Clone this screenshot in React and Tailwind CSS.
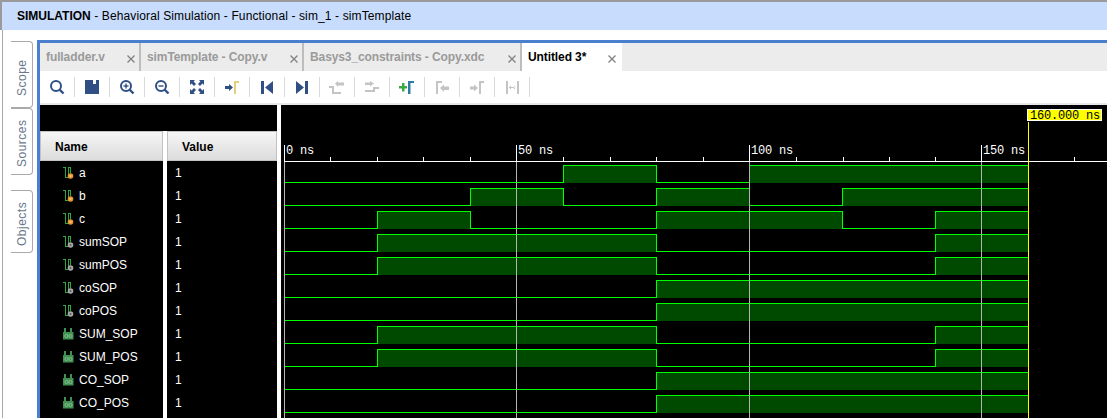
import React from 'react';

const signals = [
  { name: 'a', kind: 'in', edges: [564, 657, 750] },
  { name: 'b', kind: 'in', edges: [471, 564, 657, 750, 843] },
  { name: 'c', kind: 'in', edges: [378, 471, 657, 843, 936] },
  { name: 'sumSOP', kind: 'net', edges: [378, 657, 936] },
  { name: 'sumPOS', kind: 'net', edges: [378, 657, 936] },
  { name: 'coSOP', kind: 'net', edges: [657] },
  { name: 'coPOS', kind: 'net', edges: [657] },
  { name: 'SUM_SOP', kind: 'reg', edges: [378, 657, 936] },
  { name: 'SUM_POS', kind: 'reg', edges: [378, 657, 936] },
  { name: 'CO_SOP', kind: 'reg', edges: [657] },
  { name: 'CO_POS', kind: 'reg', edges: [657] },
];

const tabs = [
  { label: 'fulladder.v', width: 'w-[101px]' },
  { label: 'simTemplate - Copy.v', width: 'w-[163px]' },
  { label: 'Basys3_constraints - Copy.xdc', width: 'w-[218px]' },
  { label: 'Untitled 3*', width: 'w-[100px]', active: true },
];

const NAVY = '#2f4f85';
const GRAY = '#c4c4c4';

const Glass = ({ sign }) => (
  <>
    <circle cx="7" cy="7" r="5" fill="none" stroke={NAVY} strokeWidth="2" />
    <path d="M10.5 10.5 L14.5 14.5" stroke={NAVY} strokeWidth="2.4" />
    {sign && <path d="M4.5 7 H9.5" stroke={NAVY} strokeWidth="1.4" />}
    {sign === '+' && <path d="M7 4.5 V9.5" stroke={NAVY} strokeWidth="1.4" />}
  </>
);

const toolbarIcons = [
  <Glass />,
  <path fill={NAVY} fillRule="evenodd" d="M1 1 H15 V15 H1 Z M9 1 V5 H12 V1 Z" />,
  <Glass sign="+" />,
  <Glass sign="-" />,
  <path fill={NAVY} d="M1 1 H6 L4.6 2.6 L7 5 L5 7 L2.6 4.6 L1 6 Z M15 1 V6 L13.4 4.6 L11 7 L9 5 L11.4 2.6 L10 1 Z M1 15 V10 L2.6 11.4 L5 9 L7 11 L4.6 13.4 L6 15 Z M15 15 H10 L11.4 13.4 L9 11 L11 9 L13.4 11.4 L15 10 Z" />,
  <>
    <path fill={NAVY} d="M1 7 H5 V5 L9 8.5 L5 12 V10 H1 Z" />
    <path fill="#e6cf7c" d="M10 2 H15 V4 H12 V15 H10 Z" />
  </>,
  <path fill={NAVY} d="M2 2 H5 V15 H2 Z M14 2 V15 L6 8.5 Z" />,
  <path fill={NAVY} d="M11 2 H14 V15 H11 Z M2 2 V15 L10 8.5 Z" />,
  <path fill={GRAY} d="M6 4.5 L9 2 V3.5 H15 V6.5 H9 V8 Z M0 7 H5 V13 H12 V15 H3 V9 H0 Z" />,
  <path fill={GRAY} d="M1 3.5 H6 V2 L10 4.5 L6 7.5 V6 H1 Z M1 11 H9 V8 H15 V10 H11 V13 H1 Z" />,
  <>
    <path fill="#3aa845" d="M0 7 H3 V4 H5.5 V7 H8 V9.5 H5.5 V12.5 H3 V9.5 H0 Z" />
    <path fill="#2f78a8" d="M9 2 H15 V4 H11.5 V15 H9 Z" />
  </>,
  <path fill={GRAY} d="M2 2 H8 V4 H4 V15 H2 Z M6 9 L10 5.5 V7.5 H15 V11 H10 V13 Z" />,
  <path fill={GRAY} d="M1 7.5 H5 V5.5 L9 9 L5 12.5 V10.5 H1 Z M10 2 H15 V4 H12 V15 H10 Z" />,
  <path fill={GRAY} d="M2 2 H4 V15 H2 Z M13 2 H15 V15 H13 Z M5 8 H12 V9 H5 Z M5 8.5 L7 6.5 V10.5 Z M12 8.5 L10 6.5 V10.5 Z" />,
];

const SignalIcon = ({ kind }) => {
  if (kind === 'reg') {
    return (
      <svg width="12" height="12" viewBox="0 0 12 12" className="shrink-0">
        <path fill="#3f9150" d="M0 4 H1 V0 H3 V4 H7 V0 H9 V4 H10.5 V11.5 H0 Z" />
        <circle cx="3.5" cy="8" r="1.6" fill="none" stroke="#8fc79a" strokeWidth="0.8" />
        <circle cx="7.5" cy="8" r="1.6" fill="none" stroke="#8fc79a" strokeWidth="0.8" />
      </svg>
    );
  }
  return (
    <svg width="12" height="12" viewBox="0 0 12 12" className="shrink-0">
      <path d="M0 0.5 H2.5 V10.5 H5.5 V0.5 H8" fill="none" stroke="#2ea83f" strokeWidth="1" shapeRendering="crispEdges" />
      <path d="M7.5 0.5 V6" fill="none" stroke="#2ea83f" strokeWidth="1" shapeRendering="crispEdges" />
      <circle cx="7.5" cy="9" r="2.8" fill={kind === 'in' ? '#e8962e' : '#a8a8a8'} />
      <circle cx="7.5" cy="9" r="1" fill={kind === 'in' ? '#f8d080' : '#5c5c5c'} />
    </svg>
  );
};

// text runs bottom to top, so the padding at the top ends up under the label
const RailTab = ({ label, height, pad }) => (
  <div className={`flex w-[22px] items-center justify-start rounded-l-[4px] border border-r-0 border-[#a9a9a9] [writing-mode:vertical-rl] rotate-180 ${height} ${pad}`}>
    <span className="text-[12px] tracking-[0.5px] text-[#69788a]">{label}</span>
  </div>
);

// wave shape for one row, level toggles on every edge
const Wave = ({ edges, row }) => {
  const high = 165 + row * 23;
  const low = 182 + row * 23;
  const xs = [285, ...edges, 1029];
  const segments = xs.slice(0, -1).map((x, i) => ({ x, end: xs[i + 1], on: i % 2 === 1 }));
  let d = `M284.5 ${low + 0.5}`;
  segments.forEach((s, i) => {
    const y = (s.on ? high : low) + 0.5;
    if (i > 0) d += ` L${s.x - 0.5} ${y}`;
    d += ` L${s.end - 0.5} ${y}`;
  });
  return (
    <g>
      {segments.filter((s) => s.on).map((s) => (
        <rect key={s.x} x={s.x - 1} y={high} width={s.end - s.x} height={low - high + 1} fill="#004a00" />
      ))}
      <path d={d} fill="none" stroke="#00ff00" strokeWidth="1" shapeRendering="crispEdges" />
    </g>
  );
};

const majors = [
  { x: 284, label: '0 ns' },
  { x: 516, label: '50 ns' },
  { x: 749, label: '100 ns' },
  { x: 981, label: '150 ns' },
];
const minors = [330, 377, 423, 470, 563, 610, 656, 703, 796, 843, 889, 935, 1074];

const WaveView = () => (
  <svg width="826" height="313" viewBox="281 105 826 313" className="block shrink-0" fontFamily="'Liberation Mono', monospace" fontSize="12">
    {signals.map((s, i) => (
      <Wave key={s.name} edges={s.edges} row={i} />
    ))}
    <rect x="284" y="161" width="823" height="1" fill="#fff" />
    {minors.map((x) => (
      <rect key={x} x={x} y="157" width="1" height="4" fill="#fff" />
    ))}
    {majors.map((m) => (
      <g key={m.x}>
        <rect x={m.x} y="145" width="1" height="16" fill="#fff" />
        <rect x={m.x} y="162" width="1" height="256" fill="#b4b4b4" />
        <text x={m.x + 2} y="154" fill="#fff" letterSpacing="-0.2">{m.label}</text>
      </g>
    ))}
    <rect x="1028" y="122" width="1" height="296" fill="#ffff00" />
    <rect x="1027.5" y="109.5" width="74" height="11" fill="#ffff00" stroke="#fff" />
    <text x="1030" y="119" fill="#000" letterSpacing="-0.2">160.000 ns</text>
  </svg>
);

export default function App() {
  return (
    <div className="flex h-[418px] w-[1107px] flex-col overflow-hidden bg-white font-['Liberation_Sans',Arial,sans-serif]">
      {/* Title bar */}
      <div className="flex h-[30px] shrink-0 items-center border-t-2 border-l-2 border-[#9a9a9a] bg-[#c8dcfd] pl-[15px] text-[12px] text-black">
        <span className="font-bold">SIMULATION</span>
        <span className="whitespace-pre tracking-[0.12px]"> - Behavioral Simulation - Functional - sim_1 - simTemplate</span>
      </div>

      <div className="flex min-h-0 flex-1">
        {/* Side tabs */}
        <div className="ml-[2px] flex w-[35px] shrink-0 flex-col border-l border-[#a9a9a9] pl-[8px] pt-[11px]">
          <RailTab label="Scope" height="h-[67px]" pad="pt-[11px]" />
          <RailTab label="Sources" height="h-[67px]" pad="pt-[7px]" />
          <div className="h-[15px]" />
          <RailTab label="Objects" height="h-[63px]" pad="pt-[6px]" />
        </div>

        <div className="flex min-w-0 flex-1 flex-col pt-[10px]">
          <div className="flex min-h-0 flex-1 flex-col border-t-[3px] border-l-[3px] border-[#4a7fd0]">
            {/* Tabs */}
            <div className="flex h-[28px] shrink-0 bg-[#ececec] text-[12px] font-bold tracking-[-0.1px]">
              {tabs.map((t) => (
                <div
                  key={t.label}
                  className={`flex items-center justify-between ${t.width} ${t.active ? 'bg-white pl-[6px] pr-[5px] text-black' : 'border-r-2 border-[#bdbdbd] pl-[6px] pr-[3px] text-[#9a9a9a]'}`}
                >
                  <span>{t.label}</span>
                  <svg width="10" height="10" viewBox="0 0 10 10" className="mt-[3px]">
                    <path d="M1.5 1.5 L8.5 8.5 M8.5 1.5 L1.5 8.5" stroke="#808080" strokeWidth="1.3" />
                  </svg>
                </div>
              ))}
            </div>

            {/* Toolbar */}
            <div className="flex h-[32px] shrink-0 items-center bg-white">
              {toolbarIcons.map((icon, i) => (
                <div key={i} className="flex h-[20px] w-[35px] items-center justify-center border-r border-[#d9d9d9]">
                  <svg width="16" height="16" viewBox="0 0 16 16">{icon}</svg>
                </div>
              ))}
            </div>
            <div className="h-[2px] shrink-0 bg-[#e8e8e8]" />

            {/* Wave window */}
            <div className="flex min-h-0 flex-1 overflow-hidden">
              <div className="flex w-[237px] shrink-0 flex-col">
                <div className="h-[26px] shrink-0 bg-black" />
                <div className="flex h-[30px] shrink-0 text-[12px] font-bold text-black">
                  <div className="flex w-[123px] items-center border border-[#c2c2c2] bg-gradient-to-b from-[#f6f6f6] to-[#dcdcdc] pl-[14px] pt-[2px]">Name</div>
                  <div className="w-[4px] bg-white" />
                  <div className="flex w-[110px] items-center border border-[#c2c2c2] bg-gradient-to-b from-[#f6f6f6] to-[#dcdcdc] pl-[14px] pt-[2px]">Value</div>
                </div>
                <div className="flex min-h-0 flex-1 text-[12px] text-white">
                  <div className="w-[123px] bg-black">
                    {signals.map((s) => (
                      <div key={s.name} className="flex h-[23px] items-center gap-[4px] pl-[23px]">
                        <SignalIcon kind={s.kind} />
                        <span>{s.name}</span>
                      </div>
                    ))}
                  </div>
                  <div className="w-[4px] bg-white" />
                  <div className="w-[110px] bg-black">
                    {signals.map((s) => (
                      <div key={s.name} className="flex h-[23px] items-center pl-[8px]">1</div>
                    ))}
                  </div>
                </div>
              </div>
              <div className="w-[4px] shrink-0 bg-white" />
              <div className="flex-1 bg-black">
                <WaveView />
              </div>
            </div>
          </div>
        </div>
      </div>
    </div>
  );
}
